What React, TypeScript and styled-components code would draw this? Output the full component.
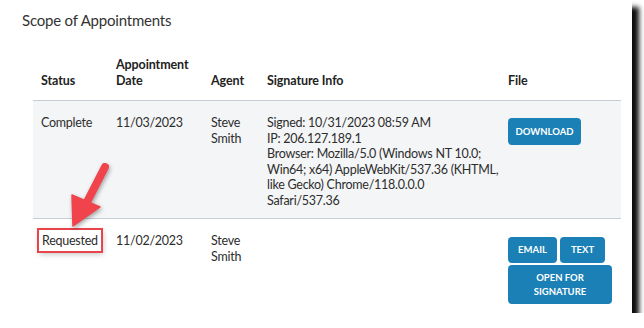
import styled, { createGlobalStyle } from "styled-components";

const GlobalStyle = createGlobalStyle`
  html, body {
    margin: 0;
    padding: 0;
    background: #ffffff;
  }
  body {
    font-family: "Source Sans Pro", Lato, "Liberation Sans", sans-serif;
    color: #2d2d2d;
  }
`;

const Card = styled.div`
  position: relative;
  width: 632px;
  height: 313px;
  background: #ffffff;
  box-shadow: 7px 7px 5px rgba(0, 0, 0, 0.95);
  box-sizing: border-box;
  padding: 11px 11px 0 22px;
`;

const Title = styled.h2`
  margin: 0;
  font-size: 15px;
  font-weight: 400;
  line-height: 18px;
  letter-spacing: -0.2px;
  color: #333;
`;

const Table = styled.div`
  margin: 28px 0 0 11px;
  display: grid;
  grid-template-columns: 75px 95px 56px 241px 121px;
`;

const HeadCell = styled.div`
  display: flex;
  align-items: flex-end;
  padding: 0 8px 11px 8px;
  font-size: 12.5px;
  font-weight: 700;
  line-height: 16px;
  letter-spacing: -0.1px;
  color: #222;
  border-bottom: 1px solid #c8cdd5;
`;

const Cell = styled.div<{ $shaded?: boolean; $last?: boolean }>`
  padding: 14px 8px ${(p) => (p.$last ? "9px" : "10px")} 8px;
  font-size: 12.5px;
  line-height: 15.5px;
  letter-spacing: -0.25px;
  color: #2d2d2d;
  background: ${(p) => (p.$shaded ? "#f4f5f7" : "#ffffff")};
  border-bottom: ${(p) => (p.$last ? "none" : "1px solid #c8cdd5")};
`;

const Line = styled.div`
  white-space: nowrap;
`;

const Marked = styled.span`
  outline: 2.5px solid #e8444c;
  outline-offset: 3px;
  box-shadow: 0 0 0 5px #fff, 1px 2px 6px 4px rgba(0, 0, 0, 0.25);
`;

const ButtonStack = styled.div<{ $top?: number }>`
  display: flex;
  flex-wrap: wrap;
  gap: 2px 3px;
  width: 105px;
  margin-top: ${(p) => p.$top ?? 3}px;
`;

const Button = styled.button<{ $w: number; $h?: number }>`
  width: ${(p) => p.$w}px;
  height: ${(p) => p.$h ?? 26}px;
  padding: 0 4px;
  border: none;
  border-radius: 4px;
  background: #1b80b6;
  color: #fff;
  font-family: inherit;
  font-size: 9.5px;
  font-weight: 700;
  line-height: 14px;
  letter-spacing: 0;
  text-transform: uppercase;
  cursor: pointer;
`;

const Arrow = styled.svg`
  position: absolute;
  left: 60px;
  top: 160px;
  overflow: visible;
  filter: drop-shadow(1px 2px 2px rgba(0, 0, 0, 0.35));
`;

export default function App() {
  return (
    <>
      <GlobalStyle />
      <Card>
        <Title>Scope of Appointments</Title>
        <Table>
          <HeadCell>Status</HeadCell>
          <HeadCell>
            Appointment
            <br />
            Date
          </HeadCell>
          <HeadCell>Agent</HeadCell>
          <HeadCell>Signature Info</HeadCell>
          <HeadCell>File</HeadCell>

          <Cell $shaded>Complete</Cell>
          <Cell $shaded>11/03/2023</Cell>
          <Cell $shaded>
            Steve
            <br />
            Smith
          </Cell>
          <Cell $shaded>
            <Line>Signed: 10/31/2023 08:59 AM</Line>
            <Line>IP: 206.127.189.1</Line>
            <Line>Browser: Mozilla/5.0 (Windows NT 10.0;</Line>
            <Line>Win64; x64) AppleWebKit/537.36 (KHTML,</Line>
            <Line>like Gecko) Chrome/118.0.0.0</Line>
            <Line>Safari/537.36</Line>
          </Cell>
          <Cell $shaded>
            <ButtonStack>
              <Button $w={73} $h={27}>
                Download
              </Button>
            </ButtonStack>
          </Cell>

          <Cell $last style={{ paddingLeft: 9 }}>
            <Marked>Requested</Marked>
          </Cell>
          <Cell $last>11/02/2023</Cell>
          <Cell $last>
            Steve
            <br />
            Smith
          </Cell>
          <Cell $last />
          <Cell $last>
            <ButtonStack $top={4}>
              <Button $w={49}>Email</Button>
              <Button $w={45}>Text</Button>
              <Button $w={104} $h={39}>
                Open for
                <br />
                Signature
              </Button>
            </ButtonStack>
          </Cell>
        </Table>
        <Arrow width="50" height="70" viewBox="0 0 50 70">
          <path
            d="M45 7 L28 40"
            stroke="#f0434b"
            strokeWidth="8"
            strokeLinecap="round"
            fill="none"
          />
          <path d="M13 66 L12 35 L40 47 Z" fill="#f0434b" stroke="#f0434b" strokeWidth="1.5" strokeLinejoin="round" />
        </Arrow>
      </Card>
    </>
  );
}
